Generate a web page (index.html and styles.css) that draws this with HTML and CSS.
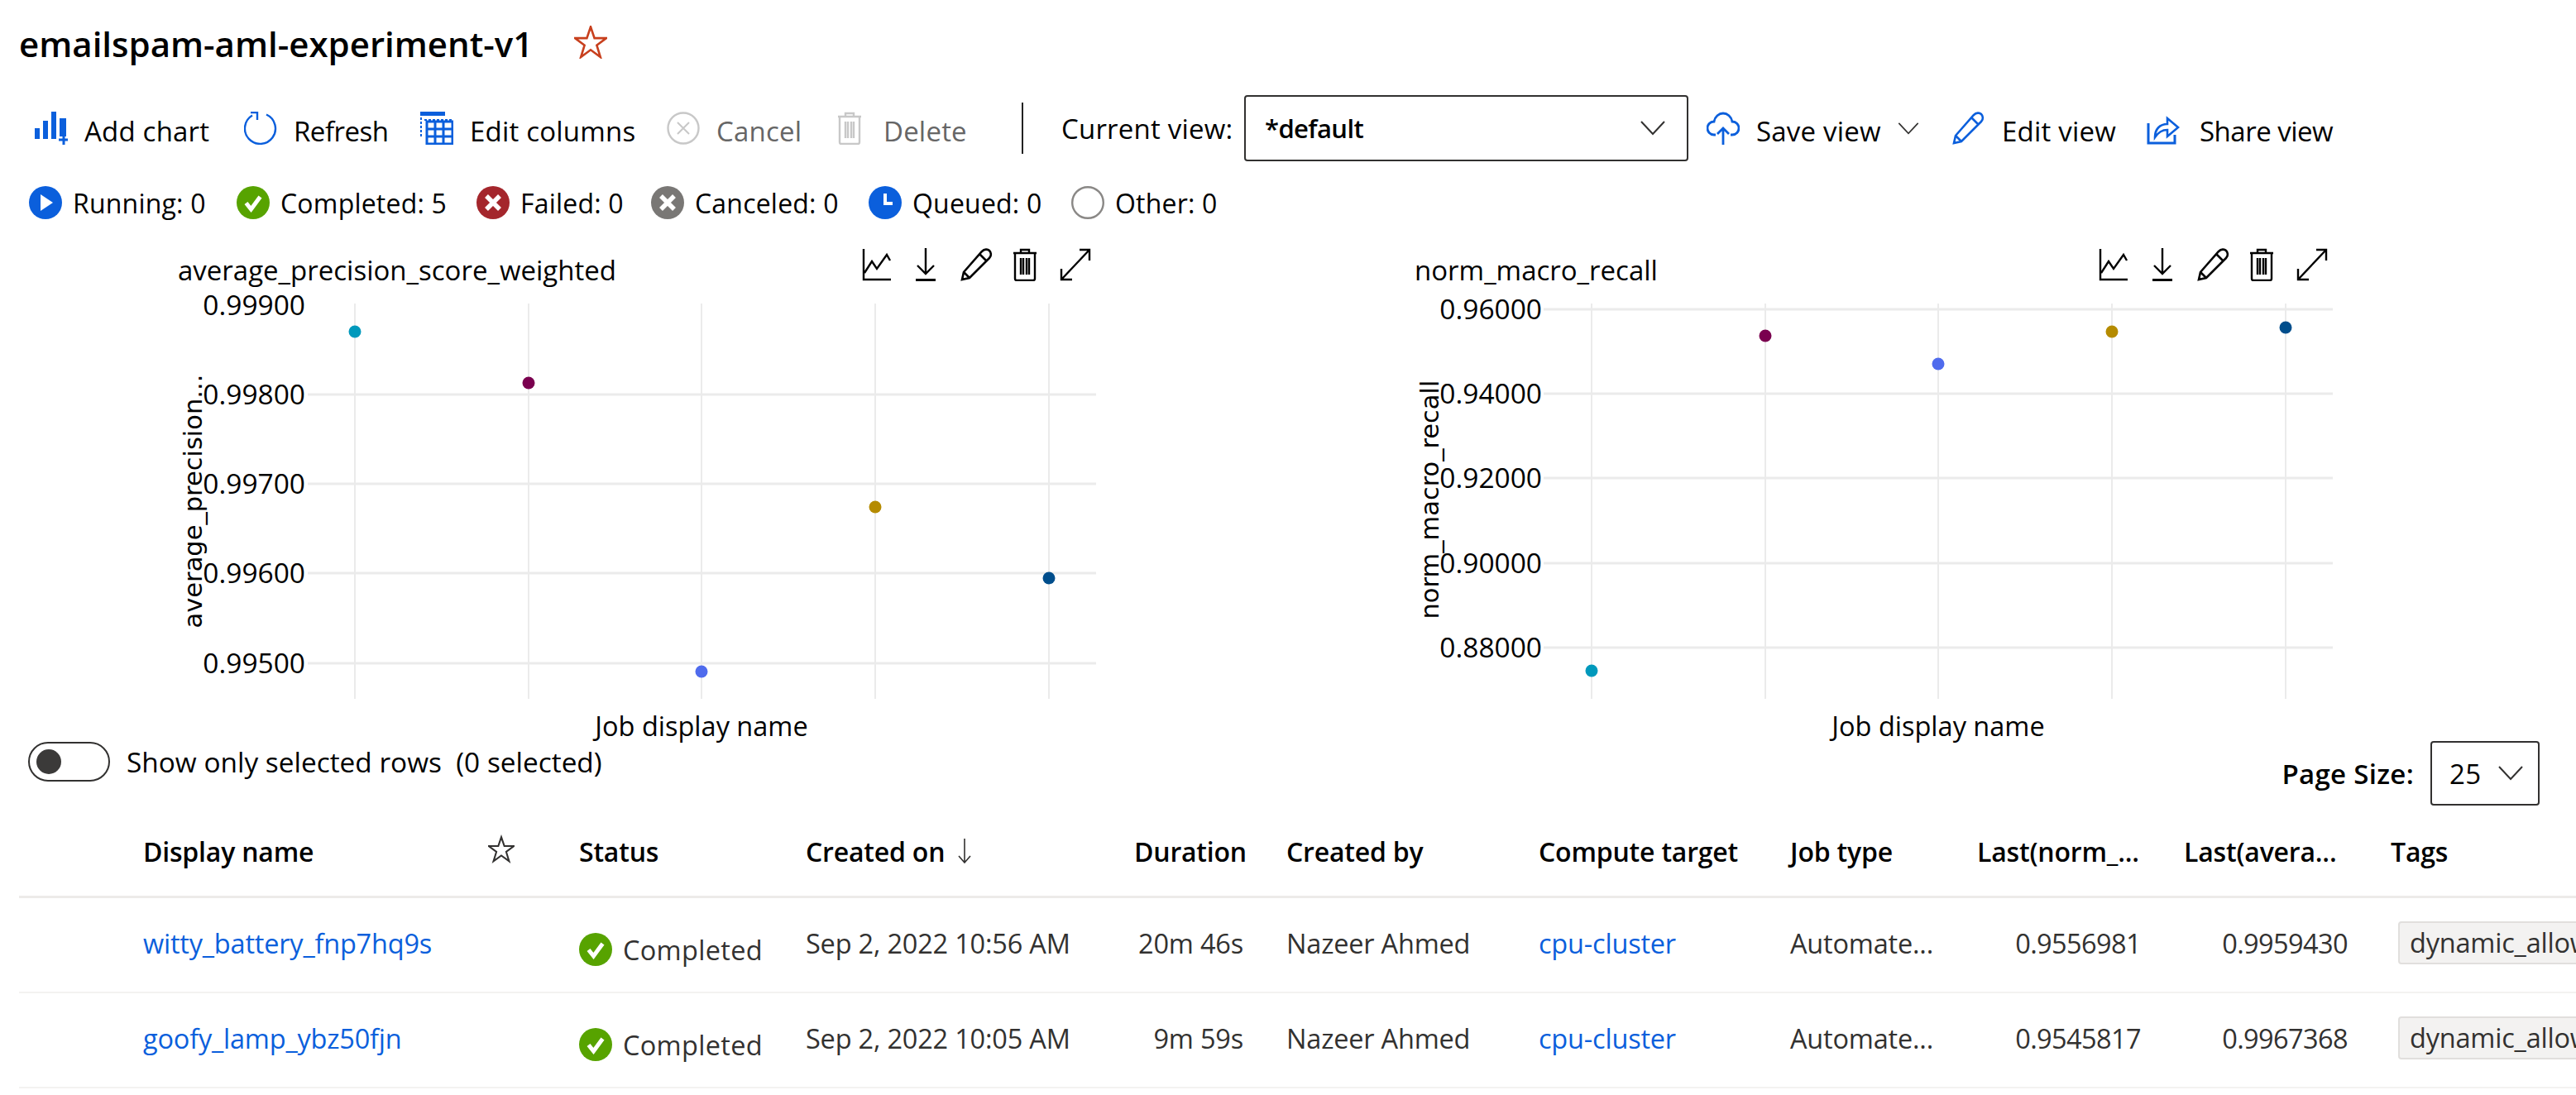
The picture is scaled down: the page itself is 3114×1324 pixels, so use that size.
FILE: index.html
```html
<!DOCTYPE html>
<html lang="en">
<head>
  <meta charset="UTF-8">
  <title>emailspam-aml-experiment-v1</title>
  <link rel="stylesheet" href="styles.css">
</head>
<body>
  <svg class="defs" width="0" height="0">
    <symbol id="star" viewBox="0 0 40 40"><path d="M20 1.5l4.6 13.6h14.4l-11.6 8.6 4.4 14.3L20 29.3 8.2 38l4.4-14.3L1 15.1h14.4z" fill="none" stroke="currentColor" stroke-width="2.6"/></symbol>
    <symbol id="check-circle" viewBox="0 0 40 40"><circle cx="20" cy="20" r="20" fill="#57a300"/><path d="M11.5 20.5l6 7.5 11-15" fill="none" stroke="#fff" stroke-width="5"/></symbol>
    <symbol id="chevron" viewBox="0 0 30 18"><path d="M1 1l14 15L29 1" fill="none" stroke="currentColor" stroke-width="2"/></symbol>
    <symbol id="trend" viewBox="0 0 36 40"><path d="M2 1v37h33M3 30l9-14 6 9 12-17 4 7" fill="none" stroke="currentColor" stroke-width="2.4"/></symbol>
    <symbol id="download" viewBox="0 0 24 40"><path d="M12 0v31M2 21l10 10 10-10" fill="none" stroke="currentColor" stroke-width="2.4"/><path d="M0 38.5h24" stroke="currentColor" stroke-width="3"/></symbol>
    <symbol id="pencil" viewBox="0 0 40 40"><path d="M2 38l2-9L26 4c3-3 7-3 9-1s3 6 0 9L11 36zM4 29l7 7M23 7l9 9" fill="none" stroke="currentColor" stroke-width="2.6"/></symbol>
    <symbol id="trash" viewBox="0 0 32 40"><path d="M2 6h28M11 6V2h10v4M4 6v31c0 1 1 2 2 2h20c1 0 2-1 2-2V6M11 12v20M14 12v20M18 12v20M21 12v20" fill="none" stroke="currentColor" stroke-width="2.4"/></symbol>
    <symbol id="expand" viewBox="0 0 38 40"><path d="M2 38L36 2M24 2h12v13M2 25v13h13" fill="none" stroke="currentColor" stroke-width="2.4"/></symbol>
  </svg>

  <div class="page">
    <div class="title-row">
      <h1>emailspam-aml-experiment-v1</h1>
      <svg class="title-star"><use href="#star"/></svg>
    </div>

    <div class="toolbar">
      <div class="tool">
        <svg class="icon" viewBox="0 0 40 40"><path d="M0 20h6v13H0zM10 11h6v22h-6zM20 0h6v33h-6zM30 8h8v22h-8z" fill="#0b5fdc"/><path d="M35 28v12M29 34h11" stroke="#0b5fdc" stroke-width="3"/></svg>
        <span>Add chart</span>
      </div>
      <div class="tool">
        <svg class="icon" viewBox="0 0 40 40"><path d="M27 3.5a18.5 18.5 0 1 1-17 1" fill="none" stroke="#0b5fdc" stroke-width="2.4"/><path d="M8 1h8v9" fill="none" stroke="#0b5fdc" stroke-width="2.4"/></svg>
        <span class="tight">Refresh</span>
      </div>
      <div class="tool">
        <svg class="icon" viewBox="0 0 40 40"><path d="M0 0h30v5H0z" fill="#0b5fdc"/><path d="M1 7v23M5 10h34" stroke="#0b5fdc" stroke-width="2" stroke-dasharray="3 2"/><path d="M8 12h31v27H8zM18 12v27M28 12v27M8 21h31M8 30h31" fill="none" stroke="#0b5fdc" stroke-width="3"/></svg>
        <span>Edit columns</span>
      </div>
      <div class="tool disabled">
        <svg class="icon" viewBox="0 0 40 40"><circle cx="20" cy="20" r="18.5" fill="none" stroke="#c8c8c8" stroke-width="2.4"/><path d="M13 13l14 14M27 13L13 27" stroke="#c8c8c8" stroke-width="2"/></svg>
        <span>Cancel</span>
      </div>
      <div class="tool disabled wide-gap">
        <svg class="icon icon-trash"><use href="#trash"/></svg>
        <span>Delete</span>
      </div>
      <div class="divider"></div>
      <label class="view-label">Current view:</label>
      <div class="dropdown">
        <span>*default</span>
        <svg class="chevron"><use href="#chevron"/></svg>
      </div>
      <div class="spacer"></div>
      <div class="tool">
        <svg class="icon" viewBox="0 0 40 40"><path d="M11 28H9C4 28 1 24 1 20s3-8 8-8c1-6 6-10 11-10s10 4 11 10c5 0 8 4 8 8s-3 8-8 8h-2" fill="none" stroke="#0b5fdc" stroke-width="2.8"/><path d="M20 40V20M13 27l7-7 7 7" fill="none" stroke="#0b5fdc" stroke-width="2.8"/></svg>
        <span>Save view</span>
        <svg class="chevron save-chevron"><use href="#chevron"/></svg>
      </div>
      <div class="tool">
        <svg class="icon blue"><use href="#pencil"/></svg>
        <span>Edit view</span>
      </div>
      <div class="tool wide-gap">
        <svg class="icon" viewBox="0 0 40 40"><path d="M2 14v24h32V28" fill="none" stroke="#0b5fdc" stroke-width="3"/><path d="M10 31c0-10 6-16 15-16V8l13 11-13 11v-8c-7 0-11 3-15 9z" fill="none" stroke="#0b5fdc" stroke-width="2.6"/></svg>
        <span class="tight">Share view</span>
      </div>
    </div>

    <div class="status-row">
      <div class="status">
        <svg class="status-icon" viewBox="0 0 40 40"><circle cx="20" cy="20" r="20" fill="#0b5fdc"/><path d="M14 10l15 10-15 10z" fill="#fff"/></svg>
        <span>Running: 0</span>
      </div>
      <div class="status">
        <svg class="status-icon"><use href="#check-circle"/></svg>
        <span>Completed: 5</span>
      </div>
      <div class="status">
        <svg class="status-icon" viewBox="0 0 40 40"><circle cx="20" cy="20" r="20" fill="#a4262c"/><path d="M12 12l16 16M28 12L12 28" stroke="#fff" stroke-width="5.5"/></svg>
        <span>Failed: 0</span>
      </div>
      <div class="status">
        <svg class="status-icon" viewBox="0 0 40 40"><circle cx="20" cy="20" r="20" fill="#797775"/><path d="M12 12l16 16M28 12L12 28" stroke="#fff" stroke-width="5.5"/></svg>
        <span>Canceled: 0</span>
      </div>
      <div class="status">
        <svg class="status-icon" viewBox="0 0 40 40"><circle cx="20" cy="20" r="20" fill="#0b5fdc"/><path d="M20 9v12h9" fill="none" stroke="#fff" stroke-width="4"/></svg>
        <span>Queued: 0</span>
      </div>
      <div class="status">
        <svg class="status-icon" viewBox="0 0 40 40"><circle cx="20" cy="20" r="18.8" fill="#fff" stroke="#8a8886" stroke-width="2.4"/></svg>
        <span>Other: 0</span>
      </div>
    </div>

    <div class="charts">
      <div class="chart">
        <div class="chart-head">
          <span class="chart-title">average_precision_score_weighted</span>
          <div class="chart-actions">
            <svg class="a-trend"><use href="#trend"/></svg>
            <svg class="a-download"><use href="#download"/></svg>
            <svg class="a-pencil"><use href="#pencil"/></svg>
            <svg class="a-trash"><use href="#trash"/></svg>
            <svg class="a-expand"><use href="#expand"/></svg>
          </div>
        </div>
        <svg class="plot" viewBox="0 0 1130 545">
          <g class="grid">
            <path d="M172 131H1125M172 239H1125M172 347H1125M172 456H1125"/>
            <path class="thin" d="M229 21V499M439 21V499M648 21V499M858 21V499M1068 21V499"/>
          </g>
          <g class="ticks">
            <text x="169" y="35">0.99900</text>
            <text x="169" y="143">0.99800</text>
            <text x="169" y="251">0.99700</text>
            <text x="169" y="359">0.99600</text>
            <text x="169" y="468">0.99500</text>
          </g>
          <text class="y-title" transform="translate(33 260) rotate(-90)">average_precision...</text>
          <text class="x-title" x="648" y="544">Job display name</text>
          <circle cx="229" cy="55" r="7.5" fill="#0099bc"/>
          <circle cx="439" cy="117" r="7.5" fill="#7a004f"/>
          <circle cx="648" cy="466" r="7.5" fill="#4f6bed"/>
          <circle cx="858" cy="267" r="7.5" fill="#b58b00"/>
          <circle cx="1068" cy="353" r="7.5" fill="#004e8c"/>
        </svg>
      </div>
      <div class="chart">
        <div class="chart-head">
          <span class="chart-title">norm_macro_recall</span>
          <div class="chart-actions">
            <svg class="a-trend"><use href="#trend"/></svg>
            <svg class="a-download"><use href="#download"/></svg>
            <svg class="a-pencil"><use href="#pencil"/></svg>
            <svg class="a-trash"><use href="#trash"/></svg>
            <svg class="a-expand"><use href="#expand"/></svg>
          </div>
        </div>
        <svg class="plot" viewBox="0 0 1130 545">
          <g class="grid">
            <path d="M171 28H1125M171 130H1125M171 232H1125M171 335H1125M171 437H1125"/>
            <path class="thin" d="M229 21V499M439 21V499M648 21V499M858 21V499M1068 21V499"/>
          </g>
          <g class="ticks">
            <text x="169" y="40">0.96000</text>
            <text x="169" y="142">0.94000</text>
            <text x="169" y="244">0.92000</text>
            <text x="169" y="347">0.90000</text>
            <text x="169" y="449">0.88000</text>
          </g>
          <text class="y-title" transform="translate(33 258) rotate(-90)">norm_macro_recall</text>
          <text class="x-title" x="648" y="544">Job display name</text>
          <circle cx="229" cy="465" r="7.5" fill="#0099bc"/>
          <circle cx="439" cy="60" r="7.5" fill="#7a004f"/>
          <circle cx="648" cy="94" r="7.5" fill="#4f6bed"/>
          <circle cx="858" cy="55" r="7.5" fill="#b58b00"/>
          <circle cx="1068" cy="50" r="7.5" fill="#004e8c"/>
        </svg>
      </div>
    </div>

    <div class="filter-row">
      <div class="toggle-wrap">
        <div class="toggle"><div class="knob"></div></div>
        <span>Show only selected rows &nbsp;(0 selected)</span>
      </div>
      <div class="page-size">
        <span class="page-size-label">Page Size:</span>
        <div class="page-size-box">
          <span>25</span>
          <svg class="chevron"><use href="#chevron"/></svg>
        </div>
      </div>
    </div>

    <div class="table">
      <div class="row head">
        <div>Display name</div>
        <div class="star-cell"><svg class="head-star"><use href="#star"/></svg></div>
        <div>Status</div>
        <div class="sort-cell">Created on <svg class="sort" viewBox="0 0 16 30"><path d="M8 0v29M1 21l7 8 7-8" fill="none" stroke="#323130" stroke-width="1.6"/></svg></div>
        <div>Duration</div>
        <div>Created by</div>
        <div>Compute target</div>
        <div>Job type</div>
        <div>Last(norm_...</div>
        <div>Last(avera...</div>
        <div>Tags</div>
      </div>
      <div class="row">
        <div><a href="#">witty_battery_fnp7hq9s</a></div>
        <div></div>
        <div class="status-cell"><svg class="status-icon"><use href="#check-circle"/></svg>Completed</div>
        <div>Sep 2, 2022 10:56 AM</div>
        <div class="num">20m 46s</div>
        <div>Nazeer Ahmed</div>
        <div><a href="#">cpu-cluster</a></div>
        <div>Automate...</div>
        <div class="num metric">0.9556981</div>
        <div class="num metric">0.9959430</div>
        <div class="tag-cell"><span class="tag">dynamic_allowlist_models</span></div>
      </div>
      <div class="row">
        <div><a href="#">goofy_lamp_ybz50fjn</a></div>
        <div></div>
        <div class="status-cell"><svg class="status-icon"><use href="#check-circle"/></svg>Completed</div>
        <div>Sep 2, 2022 10:05 AM</div>
        <div class="num">9m 59s</div>
        <div>Nazeer Ahmed</div>
        <div><a href="#">cpu-cluster</a></div>
        <div>Automate...</div>
        <div class="num metric">0.9545817</div>
        <div class="num metric">0.9967368</div>
        <div class="tag-cell"><span class="tag">dynamic_allowlist_models</span></div>
      </div>
    </div>
  </div>
</body>
</html>
```

FILE: styles.css
```css
html, body {
  margin: 0;
  padding: 0;
  background: #fff;
  overflow: hidden;
}

body {
  font-family: "Open Sans", "Liberation Sans", sans-serif;
  font-size: 32.5px;
  letter-spacing: -0.2px;
  color: #000;
}

.defs {
  display: block;
  height: 0;
}

.page {
  width: 3114px;
  height: 1324px;
  overflow: hidden;
}

/* title */
.title-row {
  display: flex;
  align-items: center;
  height: 104px;
  padding-left: 23px;
  padding-bottom: 6px;
}

h1 {
  margin: 0;
  font-size: 42px;
  font-weight: 600;
  letter-spacing: 0;
}

.title-star {
  width: 40px;
  height: 40px;
  margin-left: 50px;
  margin-top: -2px;
  color: #c8401e;
}

/* toolbar */
.toolbar {
  display: grid;
  grid-template-columns: 253px 213px 298px 204px 225px 48px 221px 537px 22px 297px 235px 300px;
  align-items: center;
  height: 86px;
  margin-left: 42px;
  margin-top: 2px;
  font-size: 33px;
  letter-spacing: 0.2px;
}

.tool {
  display: flex;
  align-items: center;
  gap: 20px;
}

.tool.wide-gap {
  gap: 24px;
}

.tool span {
  position: relative;
  top: 3px;
}

.tool span.tight {
  letter-spacing: -0.5px;
}

.tool.disabled {
  color: #666;
}

.icon {
  width: 40px;
  height: 40px;
  flex: none;
}

.icon.blue {
  color: #0b5fdc;
}

.icon-trash {
  width: 34px;
  color: #c8c8c8;
}

.divider {
  width: 2px;
  height: 62px;
  background: #222;
}

.view-label {
  display: block;
}

.dropdown {
  display: flex;
  align-items: center;
  justify-content: space-between;
  height: 80px;
  box-sizing: border-box;
  padding: 0 26px 0 23px;
  border: 2px solid #323130;
  border-radius: 4px;
  font-size: 31px;
  font-weight: 600;
  letter-spacing: -0.6px;
}

.chevron {
  width: 30px;
  height: 18px;
  flex: none;
  color: #323130;
}

.save-chevron {
  width: 26px;
  height: 15px;
}

/* status counts */
.status-row {
  display: grid;
  grid-template-columns: 251px 290px 211px 263px 245px 200px;
  align-items: center;
  height: 90px;
  margin-left: 35px;
  margin-top: 2px;
  font-size: 32px;
  letter-spacing: 0.2px;
}

.status {
  display: flex;
  align-items: center;
  gap: 13px;
}

.status-icon {
  width: 40px;
  height: 40px;
  flex: none;
}

/* charts */
.charts {
  display: flex;
  gap: 365px;
  margin-left: 200px;
  margin-top: 6px;
}

.chart {
  width: 1130px;
}

.chart-head {
  display: flex;
  align-items: center;
  justify-content: space-between;
  height: 50px;
  padding-left: 15px;
}

.chart-title {
  position: relative;
  top: 5px;
  font-size: 33px;
  letter-spacing: 0;
}

.chart-actions {
  display: flex;
  align-items: center;
  margin-right: 11px;
  margin-top: -2px;
}

.chart-actions svg {
  height: 40px;
  flex: none;
}

.a-trend { width: 36px; margin-right: 29px; }
.a-download { width: 24px; margin-right: 30px; }
.a-pencil { width: 40px; margin-right: 22px; }
.a-trash { width: 32px; margin-right: 26px; }
.a-expand { width: 38px; }

.plot {
  display: block;
  width: 1130px;
  height: 545px;
  overflow: visible;
}

.grid path {
  fill: none;
  stroke: #ebebeb;
  stroke-width: 3;
}

.grid path.thin {
  stroke-width: 2;
}

.ticks text {
  font-size: 33.5px;
  letter-spacing: 0;
  text-anchor: end;
  fill: #000;
}

.y-title {
  font-family: "DejaVu Sans", sans-serif;
  font-size: 30.5px;
  letter-spacing: 0;
  text-anchor: middle;
  dominant-baseline: central;
  fill: #000;
}

.x-title {
  font-size: 32.5px;
  letter-spacing: 0;
  text-anchor: middle;
  fill: #000;
}

/* selected rows + page size */
.filter-row {
  display: flex;
  justify-content: space-between;
  align-items: flex-start;
  height: 87px;
  margin-left: 34px;
  margin-right: 44px;
}

.toggle-wrap {
  display: flex;
  align-items: center;
  gap: 20px;
  margin-top: 6px;
  font-size: 33.4px;
  letter-spacing: 0;
}

.toggle {
  display: flex;
  align-items: center;
  width: 99px;
  height: 48px;
  box-sizing: border-box;
  padding-left: 8px;
  border: 2px solid #323130;
  border-radius: 24px;
}

.knob {
  width: 30px;
  height: 30px;
  border-radius: 50%;
  background: #3b3a39;
}

.page-size {
  display: flex;
  align-items: center;
  gap: 20px;
  margin-top: 5px;
  font-size: 33px;
  letter-spacing: 0.3px;
}

.page-size-label {
  font-weight: 600;
}

.page-size-box {
  display: flex;
  align-items: center;
  justify-content: space-between;
  width: 132px;
  height: 78px;
  box-sizing: border-box;
  padding: 0 18px 0 21px;
  border: 2px solid #323130;
  border-radius: 4px;
}

/* jobs table */
.table {
  margin-left: 23px;
}

.row {
  display: grid;
  grid-template-columns: 417px 110px 274px 397px 184px 305px 304px 226px 250px 250px 1fr;
  align-items: center;
  height: 108px;
  padding-left: 150px;
  padding-bottom: 5px;
  border-bottom: 2px solid #f3f2f1;
  color: #323130;
  white-space: nowrap;
}

.row.head {
  height: 102px;
  padding-bottom: 3px;
  border-bottom: 3px solid #edebe9;
  color: #000;
  font-size: 32px;
  font-weight: 600;
  letter-spacing: -0.2px;
}

.star-cell {
  height: 40px;
}

.head-star {
  display: block;
  width: 32px;
  height: 36px;
  color: #323130;
}

.sort-cell {
  display: flex;
  align-items: center;
  gap: 16px;
}

.sort {
  width: 16px;
  height: 30px;
  flex: none;
}

.num {
  text-align: right;
  padding-right: 52px;
}

.metric {
  letter-spacing: -0.6px;
}

.row a {
  color: #0b5fdc;
  text-decoration: none;
}

.status-cell {
  display: flex;
  align-items: center;
  gap: 13px;
  position: relative;
  top: 8px;
  letter-spacing: 0.3px;
}

.tag-cell {
  padding-left: 9px;
  overflow: hidden;
}

.tag {
  display: inline-block;
  height: 48px;
  line-height: 48px;
  padding: 0 12px;
  border: 2px solid #e1dfdd;
  border-radius: 4px;
  background: #f3f2f1;
}
```
